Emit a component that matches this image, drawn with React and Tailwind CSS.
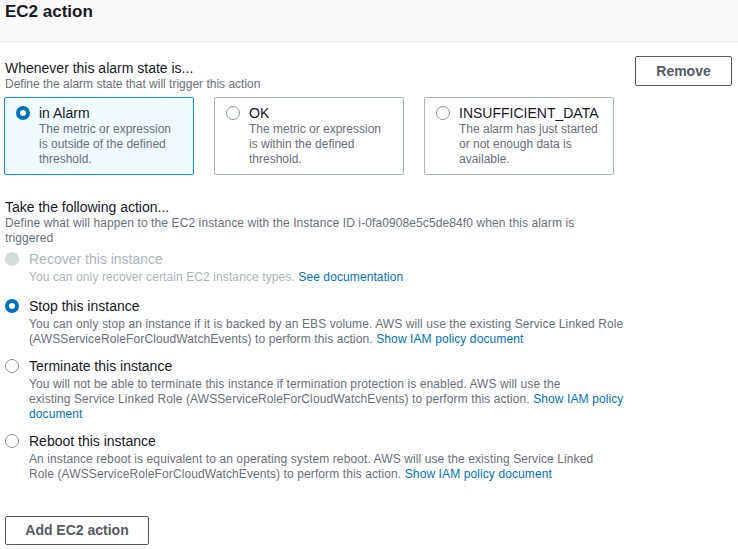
import { useState } from 'react';

const states = [
  { id: 'alarm', label: 'in Alarm', desc: 'The metric or expression is outside of the defined threshold.' },
  { id: 'ok', label: 'OK', desc: 'The metric or expression is within the defined threshold.' },
  { id: 'insufficient', label: 'INSUFFICIENT_DATA', desc: 'The alarm has just started or not enough data is available.' },
];

const actions = [
  {
    id: 'recover',
    label: 'Recover this instance',
    desc: ['You can only recover certain EC2 instance types.'],
    link: 'See documentation',
    disabled: true,
  },
  {
    id: 'stop',
    label: 'Stop this instance',
    desc: ['You can only stop an instance if it is backed by an EBS volume. AWS will use the existing Service Linked Role (AWSServiceRoleForCloudWatchEvents) to perform this action.'],
    link: 'Show IAM policy document',
  },
  {
    id: 'terminate',
    label: 'Terminate this instance',
    desc: [
      'You will not be able to terminate this instance if termination protection is enabled. AWS will use the',
      'existing Service Linked Role (AWSServiceRoleForCloudWatchEvents) to perform this action.',
    ],
    link: 'Show IAM policy document',
  },
  {
    id: 'reboot',
    label: 'Reboot this instance',
    desc: [
      'An instance reboot is equivalent to an operating system reboot. AWS will use the existing Service Linked',
      'Role (AWSServiceRoleForCloudWatchEvents) to perform this action.',
    ],
    link: 'Show IAM policy document',
  },
];

function Radio({ checked, disabled }) {
  if (disabled) return <span className="block h-[14px] w-[14px] rounded-full bg-[#d5dbdb]" />;
  if (checked) return <span className="block h-[14px] w-[14px] rounded-full border-[4px] border-[#0073bb] bg-white" />;
  return <span className="block h-[14px] w-[14px] rounded-full border border-[#879596] bg-white" />;
}

export default function App() {
  const [alarmState, setAlarmState] = useState('alarm');
  const [action, setAction] = useState('stop');

  return (
    <div className="w-[738px] h-[549px] overflow-hidden bg-white text-[#16191f] font-['Liberation_Sans',sans-serif]">
      <div className="h-[42px] bg-[#fafafa] border-b border-[#eaeded] px-[5px] pt-[2px]">
        <h2 className="text-[17px] leading-[20px] font-bold">EC2 action</h2>
      </div>

      <div className="flex pl-[5px] pt-[17px]">
        <div className="w-[622px]">
          <div className="text-[14px] leading-[18px]">Whenever this alarm state is...</div>
          <div className="text-[12px] leading-[15px] text-[#687078]">Define the alarm state that will trigger this action</div>

          <div className="flex gap-[20px] mt-[5px] -ml-[1px]">
            {states.map((s) => {
              const sel = alarmState === s.id;
              return (
                <button
                  key={s.id}
                  onClick={() => setAlarmState(s.id)}
                  className={`w-[190px] h-[78px] flex gap-[9px] pl-[11px] pr-[10px] pt-[6px] rounded-[2px] border text-left ${sel ? 'border-[#00a1c9] bg-[#f1faff]' : 'border-[#aab7b8] bg-white'}`}
                >
                  <span className="pt-[2px]"><Radio checked={sel} /></span>
                  <span>
                    <span className="block text-[14px] leading-[18px]">{s.label}</span>
                    <span className="block text-[12px] leading-[15px] text-[#687078]">{s.desc}</span>
                  </span>
                </button>
              );
            })}
          </div>

          <div className="mt-[23px] text-[14px] leading-[18px]">Take the following action...</div>
          <div className="text-[12px] leading-[15px] tracking-[0.1px] text-[#687078] pr-[40px]">
            Define what will happen to the EC2 instance with the Instance ID i-0fa0908e5c5de84f0 when this alarm is triggered
          </div>

          <div className="mt-[3px] flex flex-col gap-[9px]">
            {actions.map((a) => {
              const sel = action === a.id;
              return (
                <div
                  key={a.id}
                  onClick={() => !a.disabled && setAction(a.id)}
                  className={`flex gap-[10px] cursor-pointer ${a.disabled ? 'pb-[2px]' : ''}`}
                >
                  <span className="pt-[3px]"><Radio checked={sel} disabled={a.disabled} /></span>
                  <div>
                    <div className={`text-[14px] leading-[21px] ${a.disabled ? 'text-[#aab7b8]' : ''}`}>{a.label}</div>
                    <div className={`text-[12px] leading-[15px] tracking-[0.1px] ${a.disabled ? 'text-[#aab7b8]' : 'text-[#687078]'}`}>
                      {a.desc.map((line, i) => (
                        <span key={i}>
                          {i > 0 && <br />}
                          {line}
                        </span>
                      ))}{' '}
                      {a.id === 'terminate' ? (
                        <a className="text-[#0073bb]">Show IAM policy<br />document</a>
                      ) : (
                        <a className="text-[#0073bb]">{a.link}</a>
                      )}
                    </div>
                  </div>
                </div>
              );
            })}
          </div>

          <button className="mt-[34px] w-[144px] h-[29px] rounded-[2px] border border-[#545b64] text-[14px] font-bold text-[#545b64]">
            Add EC2 action
          </button>
        </div>

        <div className="ml-[8px] -mt-[3px]">
          <button className="w-[97px] h-[30px] rounded-[2px] border border-[#545b64] text-[14px] font-bold text-[#545b64]">
            Remove
          </button>
        </div>
      </div>
    </div>
  );
}
